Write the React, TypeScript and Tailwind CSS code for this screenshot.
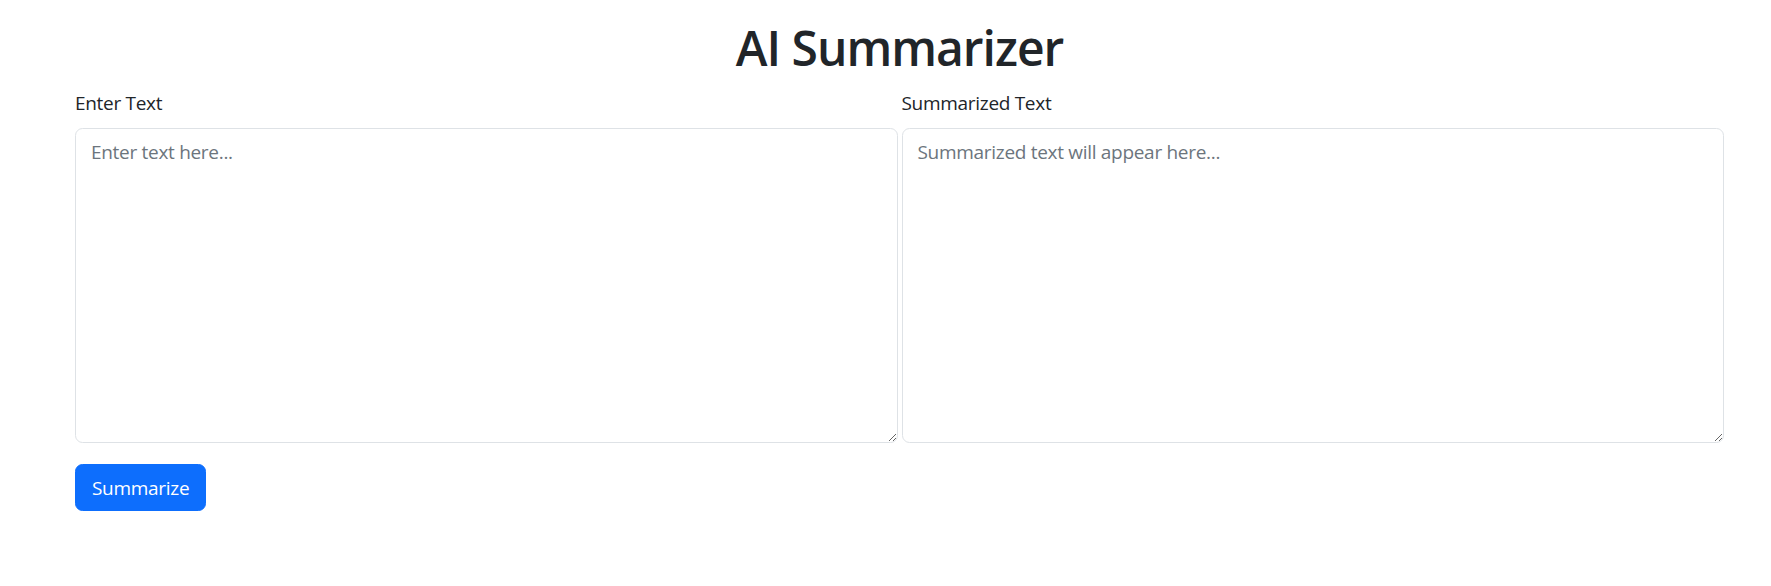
import React, { useState } from 'react';

const App: React.FC = () => {
  const [input, setInput] = useState('');
  const [summary] = useState('');

  return (
    <div className="min-h-screen bg-white text-[#212529] font-['Open_Sans','Noto_Sans',Arial,sans-serif]">
      <div className="pl-[75px] pr-[47px] pt-[18px]">
        <h1 className="text-center text-[48px] leading-[60px] font-semibold tracking-[-1px] mb-[10px]">AI Summarizer</h1>
        <div className="flex gap-[4px]">
          <div className="flex-1 flex flex-col">
            <label className="text-[19px] leading-[30px] tracking-[-0.3px] mb-[10px]">Enter Text</label>
            <textarea
              value={input}
              onChange={(e) => setInput(e.target.value)}
              placeholder="Enter text here..."
              className="h-[315px] w-full border border-[#dee2e6] rounded-[7.5px] px-[15px] py-[7.5px] text-[19px] leading-[30px] tracking-[-0.3px] outline-none placeholder:text-[#6c757d]"
            />
          </div>
          <div className="flex-1 flex flex-col">
            <label className="text-[19px] leading-[30px] tracking-[-0.3px] mb-[10px]">Summarized Text</label>
            <textarea
              value={summary}
              readOnly
              placeholder="Summarized text will appear here..."
              className="h-[315px] w-full border border-[#dee2e6] rounded-[7.5px] px-[15px] py-[7.5px] text-[19px] leading-[30px] tracking-[-0.3px] outline-none placeholder:text-[#6c757d]"
            />
          </div>
        </div>
        <button className="mt-[21px] bg-[#0d6efd] text-white text-[19px] leading-[30px] tracking-[-0.3px] px-[16px] py-[7.5px] border border-[#0d6efd] rounded-[7.5px]">
          Summarize
        </button>
      </div>
    </div>
  );
};

export default App;
